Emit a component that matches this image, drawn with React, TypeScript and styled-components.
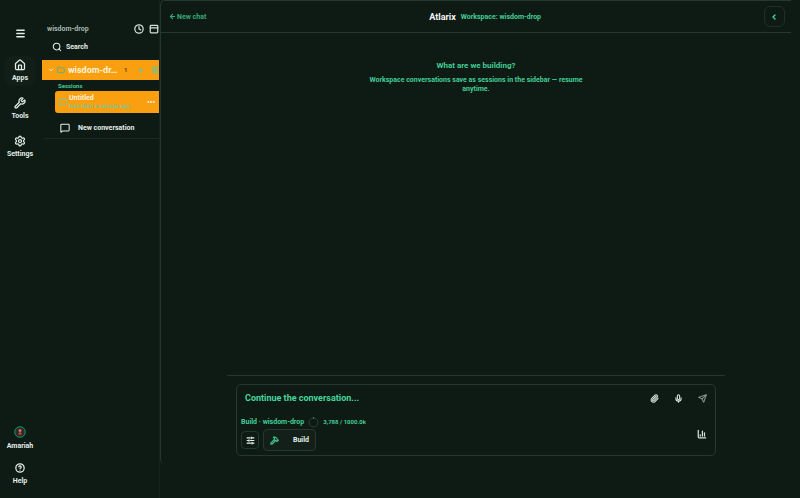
import React from "react";
import styled, { createGlobalStyle } from "styled-components";
import {
  Menu, House, Wrench, Settings, CircleHelp, Clock, PanelTop, Search, ChevronDown, Folder, Plus, Trash2,
  MessageSquare, ChevronLeft, ArrowLeft, Paperclip, Mic, Send, ChartColumn, SlidersHorizontal, Hammer,
} from "lucide-react";

const GlobalStyle = createGlobalStyle`
  * { box-sizing: border-box; }
  body {
    margin: 0;
    background: #0e1a14;
    color: #e2ede7;
    font-family: Roboto, "Liberation Sans", sans-serif;
    font-size: 7px;
    font-weight: 700;
    line-height: 10px;
  }
  button, input, h1, h2, p { margin: 0; padding: 0; font: inherit; color: inherit; }
  button { border: 0; background: none; cursor: pointer; }
  svg { display: block; flex: none; }
`;

const Page = styled.div`
  display: grid;
  grid-template-columns: 40px 120px minmax(0, 1fr);
  min-height: 100vh;
`;

const Rail = styled.nav`
  display: flex;
  flex-direction: column;
  align-items: center;
  gap: 8px;
  padding: 28px 0 9px;
`;

const MenuButton = styled.button`
  margin-bottom: 9px;
`;

const RailItem = styled.button<{ $active?: boolean }>`
  display: flex;
  flex-direction: column;
  align-items: center;
  justify-content: center;
  gap: 2px;
  width: 30px;
  height: 30px;
  border-radius: 6px;
  background: ${(p) => (p.$active ? "#111f18" : "transparent")};
`;

const RailFoot = styled.div`
  display: flex;
  flex-direction: column;
  align-items: center;
  gap: 6px;
  margin-top: auto;

  ${RailItem} { gap: 3px; }
`;

const Sidebar = styled.aside`
  min-width: 0;
  padding: 24px 0 0 2px;
  border-right: 1px solid #15231c;
  overflow: hidden;
`;

const SidebarHead = styled.div`
  display: flex;
  align-items: center;
  gap: 5px;
  height: 10px;
  padding-left: 5px;
  color: #a6b5ad;
`;

const HeadTitle = styled.span`
  flex: 1;
`;

const IconButton = styled.button`
  display: grid;
  place-items: center;
  color: ${(p) => p.color ?? "#d4e0d9"};
`;

const SearchButton = styled.button`
  display: flex;
  align-items: center;
  gap: 4px;
  height: 10px;
  margin: 8px 0 8px 10px;
`;

const Project = styled.div`
  display: flex;
  align-items: center;
  height: 20px;
  gap: 3px;
  padding-left: 6px;
  background: #fa9f10;
  color: #fff3dc;
`;

const ProjectName = styled.span`
  flex: none;
  width: 48px;
  white-space: nowrap;
  font-size: 9px;
`;

const Count = styled.span`
  width: 10px;
  margin-left: 5px;
  color: #664108;
  font-size: 6px;
`;

const ProjectActions = styled.div`
  display: flex;
  gap: 7px;
`;

const SessionsLabel = styled.h2`
  padding-left: 16px;
  color: #43cd96;
  font-size: 6px;
  line-height: 11px;
`;

const Session = styled.div`
  display: flex;
  align-items: center;
  gap: 2px;
  height: 22px;
  margin-left: 13px;
  padding: 0 4px;
  border-radius: 3px 0 0 3px;
  background: #fa9f10;
  color: #fff3dc;
`;

const SessionText = styled.div`
  flex: 1;
  min-width: 0;
  line-height: 8px;
  white-space: nowrap;
`;

const SessionTime = styled.div`
  color: #7cc795;
  font-size: 6px;
`;

const NewConversation = styled.button`
  display: flex;
  align-items: center;
  gap: 8px;
  width: 100%;
  height: 25px;
  padding: 5px 0 0 18px;
  white-space: nowrap;
`;

const SidebarRule = styled.hr`
  margin: 0 0 0 2px;
  border: 0;
  border-top: 1px solid #1b2a22;
`;

const Main = styled.main`
  display: flex;
  flex-direction: column;
  min-width: 0;
  margin: 0 9px 34px 0;
  border-top: 1px solid #25382e;
  border-left: 1px solid #25382e;
  border-radius: 5px 0 0 5px;
`;

const Header = styled.header`
  display: flex;
  align-items: center;
  justify-content: space-between;
  height: 32px;
  padding: 0 6px 0 8px;
  border-bottom: 1px solid #25382e;
`;

const BackLink = styled.a`
  display: flex;
  align-items: center;
  gap: 1px;
  color: #36a878;
  text-decoration: none;
`;

const TitleGroup = styled.div`
  display: flex;
  align-items: center;
  gap: 5px;
  color: #43cd96;
`;

const Title = styled.h1`
  color: #f0f7f3;
  font-size: 9px;
`;

const Collapse = styled.button`
  display: grid;
  place-items: center;
  width: 21px;
  height: 21px;
  border: 1px solid #1e3027;
  border-radius: 6px;
  color: #45d69b;
`;

const Empty = styled.section`
  display: flex;
  flex: 1;
  flex-direction: column;
  align-items: center;
  gap: 5px;
  padding-top: 28px;
  color: #43cd96;
  text-align: center;
`;

const EmptyTitle = styled.h2`
  font-size: 8px;
`;

const EmptyText = styled.p`
  max-width: 224px;
  line-height: 9px;
`;

const ComposerArea = styled.footer`
  align-self: center;
  width: 100%;
  max-width: 498px;
  padding: 8px 9px;
  border-top: 1px solid #25382e;
`;

const Composer = styled.form`
  display: flex;
  justify-content: space-between;
  min-height: 72px;
  padding: 5px 8px 4px 4px;
  border: 1px solid #25382e;
  border-radius: 5px;
  color: #43cd96;
`;

const ComposerLeft = styled.div`
  display: flex;
  flex: 1;
  flex-direction: column;
  min-width: 0;
`;

const Prompt = styled.input`
  width: 100%;
  height: 16px;
  padding-left: 4px;
  border: 0;
  outline: 0;
  background: transparent;
  font-size: 9px;
  &::placeholder { color: #48d69d; opacity: 1; }
`;

const Status = styled.div`
  display: flex;
  align-items: center;
  gap: 4px;
  height: 10px;
  margin-top: 11px;
`;

const Tokens = styled.span`
  font-size: 6px;
`;

const Modes = styled.div`
  display: flex;
  align-items: center;
  gap: 4px;
  height: 22px;
  margin-top: 2px;
`;

const Mode = styled.button<{ $wide?: boolean }>`
  display: flex;
  align-items: center;
  justify-content: ${(p) => (p.$wide ? "space-between" : "center")};
  width: ${(p) => (p.$wide ? "53px" : "18px")};
  height: ${(p) => (p.$wide ? "22px" : "18px")};
  padding: ${(p) => (p.$wide ? "0 6px" : "0")};
  border: 1px solid #25382e;
  border-radius: 4px;
  background: ${(p) => (p.$wide ? "#122019" : "transparent")};
  color: #e4efe8;
`;

const ComposerRight = styled.div`
  display: flex;
  flex-direction: column;
  align-items: flex-end;
  gap: 26px;
  padding-top: 4px;
`;

const Tools = styled.div`
  display: flex;
  gap: 15px;
`;

const Avatar = () => (
  <svg width="12" height="12" viewBox="0 0 12 12" aria-hidden="true">
    <circle cx="6" cy="6" r="5.3" fill="#34272a" stroke="#10996b" />
    <circle cx="6" cy="4.6" r="1.5" fill="#c4775c" />
    <path d="M4.3 8.8 5 6.2h2l.7 2.6z" fill="#a9503f" />
  </svg>
);

const UsageRing = () => (
  <svg width="11" height="11" viewBox="0 0 11 11" aria-hidden="true">
    <circle cx="5.5" cy="5.5" r="4.5" fill="none" stroke="#2c4237" />
    <path d="M5 1h1" stroke="#36c890" />
  </svg>
);

const Dots = () => (
  <svg width="8" height="4" viewBox="0 0 8 4" fill="currentColor" aria-hidden="true">
    <circle cx="1.3" cy="2" r="1" />
    <circle cx="4" cy="2" r="1" />
    <circle cx="6.7" cy="2" r="1" />
  </svg>
);

export default function App() {
  return (
    <>
      <GlobalStyle />
      <Page>
        <Rail aria-label="Primary">
          <MenuButton type="button" aria-label="Menu"><Menu size={11} strokeWidth={3} /></MenuButton>
          <RailItem type="button" $active><House size={12} strokeWidth={2.5} />Apps</RailItem>
          <RailItem type="button"><Wrench size={12} strokeWidth={2.5} />Tools</RailItem>
          <RailItem type="button"><Settings size={12} strokeWidth={2.5} />Settings</RailItem>
          <RailFoot>
            <RailItem type="button"><Avatar />Amariah</RailItem>
            <RailItem type="button"><CircleHelp size={10} strokeWidth={3} />Help</RailItem>
          </RailFoot>
        </Rail>

        <Sidebar>
          <SidebarHead>
            <HeadTitle>wisdom-drop</HeadTitle>
            <IconButton type="button" aria-label="History"><Clock size={10} strokeWidth={3} /></IconButton>
            <IconButton type="button" aria-label="Window"><PanelTop size={10} strokeWidth={3} /></IconButton>
          </SidebarHead>
          <SearchButton type="button"><Search size={10} strokeWidth={2.5} />Search</SearchButton>
          <Project>
            <ChevronDown size={6} strokeWidth={4} />
            <Folder size={8} color="#55b585" strokeWidth={3} />
            <ProjectName>wisdom-dr…</ProjectName>
            <Count>1</Count>
            <ProjectActions>
              <IconButton type="button" aria-label="Add" color="#74c08f"><Plus size={7} strokeWidth={4} /></IconButton>
              <IconButton type="button" aria-label="Delete" color="#74c08f"><Trash2 size={8} strokeWidth={3} /></IconButton>
            </ProjectActions>
          </Project>
          <SessionsLabel>Sessions</SessionsLabel>
          <Session>
            <MessageSquare size={8} color="#7cc795" strokeWidth={3} />
            <SessionText>
              <div>Untitled</div>
              <SessionTime>less than a minute ago</SessionTime>
            </SessionText>
            <IconButton type="button" aria-label="Session options" color="#fff3dc"><Dots /></IconButton>
          </Session>
          <NewConversation type="button"><MessageSquare size={10} strokeWidth={2.5} />New conversation</NewConversation>
          <SidebarRule />
        </Sidebar>

        <Main>
          <Header>
            <BackLink href="#new"><ArrowLeft size={7} strokeWidth={4} />New chat</BackLink>
            <TitleGroup><Title>Atlarix</Title>Workspace: wisdom-drop</TitleGroup>
            <Collapse type="button" aria-label="Collapse"><ChevronLeft size={8} strokeWidth={4} /></Collapse>
          </Header>
          <Empty>
            <EmptyTitle>What are we building?</EmptyTitle>
            <EmptyText>Workspace conversations save as sessions in the sidebar — resume anytime.</EmptyText>
          </Empty>
          <ComposerArea>
            <Composer>
              <ComposerLeft>
                <Prompt aria-label="Message" placeholder="Continue the conversation..." />
                <Status>
                  <span>Build · wisdom-drop</span>
                  <UsageRing />
                  <Tokens>3,788 / 1000.0k</Tokens>
                </Status>
                <Modes>
                  <Mode type="button" aria-label="Options"><SlidersHorizontal size={9} strokeWidth={3} /></Mode>
                  <Mode type="button" $wide><Hammer size={9} color="#3fc48d" strokeWidth={3} />Build</Mode>
                </Modes>
              </ComposerLeft>
              <ComposerRight>
                <Tools>
                  <IconButton type="button" aria-label="Attach"><Paperclip size={9} strokeWidth={3} /></IconButton>
                  <IconButton type="button" aria-label="Dictate"><Mic size={9} strokeWidth={3} /></IconButton>
                  <IconButton type="submit" aria-label="Send" color="#7d8f86"><Send size={9} strokeWidth={3} /></IconButton>
                </Tools>
                <IconButton type="button" aria-label="Usage"><ChartColumn size={10} strokeWidth={3} /></IconButton>
              </ComposerRight>
            </Composer>
          </ComposerArea>
        </Main>
      </Page>
    </>
  );
}
